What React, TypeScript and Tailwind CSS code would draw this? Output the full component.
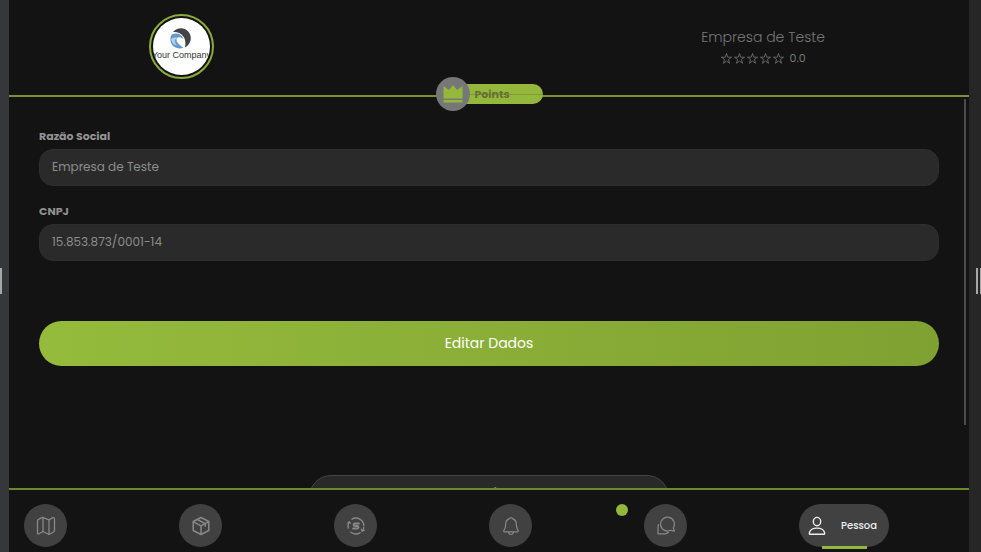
import React from 'react';

const stroke = {
  fill: 'none',
  stroke: 'currentColor',
  strokeLinecap: 'round' as const,
  strokeLinejoin: 'round' as const,
};

function MapIcon() {
  return (
    <svg viewBox="0 0 20 20" className="size-5" strokeWidth="1.3" {...stroke}>
      <path d="M1.5 5c0-.8.3-1.3 1-1.6l4-2 6.5 2.4 3.5-1.9c1-.5 2-.1 2 1v11.6c0 .8-.3 1.2-1 1.5l-4.500 2.500-6-3-4 2.300c-.9.5-1.500.2-1.500-.8z" />
      <path d="M7 1.600v13.900M13 3.800v14.500" />
    </svg>
  );
}

function PackageIcon() {
  return (
    <svg viewBox="0 0 20 20" className="size-5" strokeWidth="1.5" {...stroke}>
      <path d="M10 1.500l7.800 4v9L10 18.500l-7.800-4v-9zM2.200 5.700L10 9.800l7.800-4.100M10 9.800v8.700" />
      <path d="M6.300 3.500l7.900 4.100v2.500" />
    </svg>
  );
}

function CoinIcon() {
  return (
    <svg viewBox="0 0 20 20" className="size-5" strokeWidth="1.4" {...stroke}>
      <path d="M6 3.200A7.900 7.900 0 0 1 17.900 9.500M14 16.800A7.900 7.900 0 0 1 5 16.200M2.300 12a7.900 7.900 0 0 1 .8-5.800M17.800 11.500a7.900 7.900 0 0 1-1.500 3.400" />
      <path d="M1.800 6.700l1.600-1 .9 1.700M18.400 14.200l-2.200 1-.8-2" strokeWidth="1.200" />
      <path d="M13 7.500H8.800c-1.700 0-1.700 2.500 0 2.500h2.500c1.700 0 1.700 2.500 0 2.500H7" strokeWidth="1.800" />
    </svg>
  );
}

function BellIcon() {
  return (
    <svg viewBox="0 0 20 20" className="size-5" strokeWidth="1.2" {...stroke}>
      <path d="M10 1.500c.8 0 1.200.5 1.300 1.200 2.600.7 3.900 2.800 4 5.500.1 3.400.6 4.700 1.800 6.200.5.7.2 1.400-.6 1.400h-13c-.8 0-1.100-.7-.6-1.400 1.200-1.500 1.700-2.800 1.800-6.200.1-2.700 1.400-4.800 4-5.500.1-.7.5-1.200 1.300-1.200z" />
      <path d="M7.500 16c.2 1.600 1.200 2.500 2.500 2.500s2.300-.9 2.500-2.500" />
    </svg>
  );
}

function ChatIcon() {
  return (
    <svg viewBox="0 0 20 20" className="size-5" strokeWidth="1.200" {...stroke}>
      <path d="M17.300 11.800A6.900 6.900 0 1 0 14.500 14.300l3.900.8z" />
      <path d="M2.600 8.500a7 7 0 0 0-.6 3v6.300l7 .1a7 7 0 0 0 3.500-1.700" />
    </svg>
  );
}

function PersonIcon() {
  return (
    <svg viewBox="0 0 20 20" className="size-5" strokeWidth="1.4" {...stroke}>
      <ellipse cx="10" cy="5.600" rx="3.700" ry="4.200" />
      <path d="M2.300 17.100c.6-3.500 3.600-5 7.700-5s7.100 1.500 7.700 5c.1.8-.3 1.200-1 1.200H3.300c-.7 0-1.100-.4-1-1.200z" />
    </svg>
  );
}

function CrownIcon() {
  return (
    <svg viewBox="0 0 20 18" className="w-5 text-[#93b83c]" fill="currentColor">
      <path d="M.5 1L6 5l4-5 4 5 5.500-4v12.500H.5zM.5 15h19v2.500H.5z" />
    </svg>
  );
}

function StarIcon() {
  return (
    <svg viewBox="0 0 11 11" className="size-[11px]" fill="none" stroke="currentColor" strokeWidth="0.8">
      <path d="M5.500 .5l1.200 3.700h3.900L7.400 6.500l1.200 3.800-3.100-2.300-3.100 2.300 1.200-3.800L.4 4.200h3.900z" />
    </svg>
  );
}

function CompanyLogo() {
  return (
    <svg viewBox="0 0 57 57" className="size-[57px] rounded-full bg-white">
      <path d="M20 14C23.500 9.500 31 8.800 35 13.200c4.800 5 3.300 13-3 16.300.8-4.500.6-8.500-2-11.500-2.500-3-6-4.500-10-4z" fill="#424345" />
      <path d="M18.800 16.500c5-2.500 10-.5 11.700 4.300-3-2-5.500-2-6.700-.6-1.500 2.500 1.500 6.500 6.700 9.500-5 1.800-9.500.2-11.700-3.400-1.900-3-1.900-6.800 0-9.800z" fill="#6598cd" />
      <path d="M18 21.500c1.500-2 4.500-2.500 6.500-1.500-2 .5-3 2-2.500 4 .4 1.400 1.300 2.600 2.500 3.600-3-.6-5.500-2.600-6.500-6.100z" fill="#b9d2ec" />
      <text x="28.500" y="40" textAnchor="middle" fontSize="9" fontFamily="Liberation Sans, Arial, sans-serif" fill="#333">
        Your Company
      </text>
    </svg>
  );
}

const navItems = [
  { label: 'Mapa', icon: <MapIcon /> },
  { label: 'Produtos', icon: <PackageIcon /> },
  { label: 'Cashback', icon: <CoinIcon /> },
  { label: 'Notificações', icon: <BellIcon />, unread: true },
  { label: 'Mensagens', icon: <ChatIcon /> },
];

function Field({ id, label, value }: { id: string; label: string; value: string }) {
  return (
    <div className="flex flex-col gap-[5px]">
      <label htmlFor={id} className="text-[11px] leading-4 font-bold text-[#929292]">
        {label}
      </label>
      <input
        id={id}
        defaultValue={value}
        readOnly
        className="h-[37px] w-full rounded-[14px] border border-[#2e2e2e] bg-[#2a2a2a] px-3 pb-0.5 text-xs text-[#8c8c8c] outline-none"
      />
    </div>
  );
}

export default function App() {
  return (
    <div className="flex h-screen bg-[#131313] font-[Poppins,Inter,sans-serif]">
      <div className="flex w-[9px] shrink-0 items-center bg-[#36373b]">
        <span className="mt-2.5 h-[26px] w-0.5 bg-[#a8a8a8]" />
      </div>

      <div className="flex min-w-0 flex-1 flex-col">
        <header className="relative flex h-[97px] shrink-0 items-start justify-between border-b-2 border-[#78942f] pt-3.5 pr-36 pl-[140px]">
          <div className="flex size-[65px] items-center justify-center rounded-full border-2 border-[#8bac3c]">
            <CompanyLogo />
          </div>
          <div className="flex flex-col items-center pt-[11px] text-[#777]">
            <h1 className="text-sm leading-6 font-light">Empresa de Teste</h1>
            <div className="flex items-center gap-[2px] text-[11px] leading-[18px]">
              {[1, 2, 3, 4, 5].map((n) => (
                <StarIcon key={n} />
              ))}
              <span className="pl-1">0.0</span>
            </div>
          </div>

          {/* Points badge over the divider */}
          <div className="absolute inset-x-0 -bottom-4 z-10 flex justify-center">
            <div className="flex w-[107px] items-center">
              <span className="z-10 flex size-[34px] shrink-0 items-center justify-center rounded-full bg-[#777]">
                <CrownIcon />
              </span>
              <span className="relative -ml-3 flex h-5 flex-1 items-center rounded-r-full bg-[#93b83c] pl-[17px] text-[11px] font-bold text-[#667136]">
                <span className="absolute inset-x-0 top-1/2 h-px bg-[#7d9938]" />
                <span className="relative">Points</span>
              </span>
            </div>
          </div>
        </header>

        <main className="relative min-h-0 flex-1 overflow-hidden">
          <form className="flex flex-col px-[30px] pt-[31px]">
            <div className="flex flex-col gap-[17px]">
              <Field id="razao" label="Razão Social" value="Empresa de Teste" />
              <Field id="cnpj" label="CNPJ" value="15.853.873/0001-14" />
            </div>
            <button
              type="button"
              className="mt-[60px] h-[45px] rounded-full bg-linear-to-r from-[#95bb3c] to-[#7fa132] pb-0.5 text-sm text-white"
            >
              Editar Dados
            </button>
            <button
              type="button"
              className="mt-[109px] h-11 w-2/5 shrink-0 self-center rounded-full border border-[#444] bg-[#29292a] pb-2 text-sm text-[#8c8c8c]"
            >
              Sair
            </button>
          </form>
          <div className="absolute top-0.5 right-[3px] h-5/6 w-0.5 bg-[#4b4b4b]" />
        </main>

        <footer className="h-16 shrink-0 border-t-2 border-[#6d872e]">
          <nav className="grid grid-cols-6 px-[15px] pt-3.5">
            {navItems.map((item) => (
              <div key={item.label} className="relative">
                <button
                  aria-label={item.label}
                  className="flex size-[43px] items-center justify-center rounded-full bg-[#414141] text-[#888]"
                >
                  {item.icon}
                </button>
                {item.unread && <span className="absolute top-0 right-4 size-3 rounded-full bg-[#93b83c]" />}
              </div>
            ))}
            <button className="relative flex h-[43px] w-[90px] items-center justify-between rounded-full bg-[#414141] pr-3 pl-2 text-[10px] font-medium text-[#eee]">
              <PersonIcon />
              Pessoa
              <span className="absolute -bottom-0.5 left-1/4 h-[3px] w-1/2 bg-[#93b83c]" />
            </button>
          </nav>
        </footer>
      </div>

      <div className="flex w-3 shrink-0 items-center justify-end gap-0.5 bg-[#262626]">
        <span className="mt-2.5 h-[26px] w-0.5 bg-[#a8a8a8]" />
        <span className="mt-2.5 h-[26px] w-px bg-[#a8a8a8]" />
      </div>
    </div>
  );
}
